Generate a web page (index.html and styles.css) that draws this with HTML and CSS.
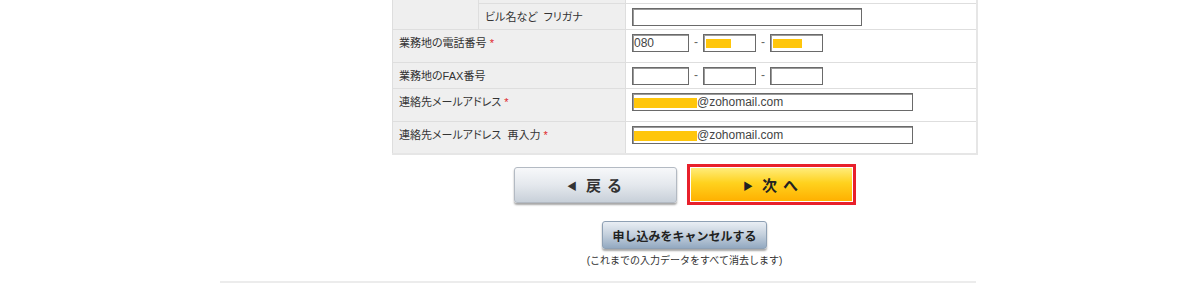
FILE: index.html
```html
<!DOCTYPE html>
<html lang="ja">
<head>
    <meta charset="UTF-8">
    <meta name="viewport" content="width=device-width, initial-scale=1.0">
    <title>お申し込み情報の入力</title>
    <link rel="stylesheet" href="styles.css">
</head>
<body>
    <div class="page">
        <div class="side"></div>
        <div class="main">
            <table class="form-table">
                <colgroup>
                    <col class="col-group">
                    <col class="col-sub">
                    <col class="col-value">
                </colgroup>
                <!-- tail of the address block, scrolled above the view -->
                <tr class="row-top">
                    <th class="group" rowspan="2"></th>
                    <th class="sub"></th>
                    <td></td>
                </tr>
                <tr class="row-s">
                    <th class="sub">ビル名など&nbsp;&nbsp;フリガナ</th>
                    <td><div class="field w-addr"></div></td>
                </tr>
                <tr class="row-l">
                    <th colspan="2">業務地の電話番号 <span class="req">*</span></th>
                    <td>
                        <div class="tel">
                            <div class="field w-tel1">080</div>
                            <span class="dash">-</span>
                            <div class="field w-tel"><span class="redact r-tel2"></span></div>
                            <span class="dash">-</span>
                            <div class="field w-tel"><span class="redact r-tel3"></span></div>
                        </div>
                    </td>
                </tr>
                <tr class="row-s">
                    <th colspan="2">業務地のFAX番号</th>
                    <td>
                        <div class="tel">
                            <div class="field w-tel1"></div>
                            <span class="dash">-</span>
                            <div class="field w-tel"></div>
                            <span class="dash">-</span>
                            <div class="field w-tel"></div>
                        </div>
                    </td>
                </tr>
                <tr class="row-l">
                    <th colspan="2">連絡先メールアドレス <span class="req">*</span></th>
                    <td><div class="field w-mail"><span class="redact r-mail"></span>@zohomail.com</div></td>
                </tr>
                <tr class="row-l">
                    <th colspan="2">連絡先メールアドレス&nbsp;&nbsp;再入力 <span class="req">*</span></th>
                    <td><div class="field w-mail"><span class="redact r-mail"></span>@zohomail.com</div></td>
                </tr>
            </table>

            <div class="nav-buttons">
                <button class="btn-back"><span class="arrow">◀</span>戻 る</button>
                <div class="next-frame">
                    <button class="btn-next"><span class="arrow">▶</span>次 へ</button>
                </div>
            </div>

            <div class="cancel">
                <button class="btn-cancel">申し込みをキャンセルする</button>
                <p class="cancel-note">(これまでの入力データをすべて消去します)</p>
            </div>
        </div>
    </div>
    <div class="page-rule"></div>
</body>
</html>
```

FILE: styles.css
```css
body {
    margin: 0;
    padding: 0;
    background: #fff;
    color: #333;
    font-family: "Liberation Sans", "Noto Sans CJK JP", sans-serif;
    font-size: 12px;
    overflow: hidden;
}

.page {
    display: flex;
    width: 756px;
    margin-left: 220px;
}
.side {
    width: 172px;
    flex-shrink: 0;
}
.main {
    width: 584px;
}

/* Form table */
.form-table {
    width: 584px;
    table-layout: fixed;
    border-collapse: collapse;
    border-top: none;
    border-left: 1px solid #e2e2e2;
    border-right: 2px solid #e6e6e6;
    border-bottom: 2px solid #e6e6e6;
}
.col-group { width: 86px; }
.col-sub { width: 147px; }
.col-value { width: 351px; }

.form-table th,
.form-table td {
    border: 1px solid #dedede;
    vertical-align: top;
    padding: 0;
}
.form-table th {
    background: #efefef;
    font-weight: normal;
    text-align: left;
    font-size: 11px;
    font-feature-settings: "palt";
    line-height: 15px;
    padding: 6px 6px 0;
    color: #333;
}
.form-table td {
    background: #fff;
    padding: 4px 6px 0;
}
.form-table .row-top th,
.form-table .row-top td {
    border-top: none;
    padding: 0;
}
.row-top { height: 3px; }
.row-s { height: 26px; }
.row-l { height: 33px; }

.req {
    color: #e0242b;
}

.field {
    box-sizing: border-box;
    height: 18px;
    border: 1px solid #6a6a6a;
    box-shadow: inset 1px 1px 0 #9a9a9a;
    background: #fff;
    padding: 1px 1px 0;
    line-height: 14px;
    font-size: 12px;
    color: #444;
    white-space: nowrap;
    overflow: hidden;
}
.w-addr { width: 230px; }
.w-tel1 { width: 57px; }
.w-tel { width: 53px; }
.w-mail { width: 281px; }

.tel {
    display: flex;
    align-items: flex-start;
}
.dash {
    width: 14px;
    text-align: center;
    color: #666;
    line-height: 16px;
}

.redact {
    display: inline-block;
    vertical-align: top;
    background: #ffc60b;
}
.r-tel2 { width: 25px; height: 9px; margin: 3px 0 0 1px; }
.r-tel3 { width: 29px; height: 9px; margin: 3px 0 0 1px; }
.r-mail { width: 63px; height: 10px; margin-top: 3px; }

/* Back / next */
.nav-buttons {
    display: flex;
    justify-content: center;
    align-items: center;
    gap: 10px;
    margin-top: 9px;
    padding-left: 1px;
}
.nav-buttons button {
    font-family: "Liberation Sans", "Noto Sans CJK JP", sans-serif;
    font-weight: bold;
    font-size: 15px;
    letter-spacing: 1px;
    cursor: pointer;
}
.arrow {
    font-size: 10px;
    margin-right: 8px;
    position: relative;
    top: -1px;
}
.btn-back {
    width: 163px;
    height: 36px;
    border: 1px solid #b3bac3;
    border-radius: 3px;
    background: linear-gradient(#f7f8fa, #e4e8ed 50%, #c8d0d9);
    box-shadow: 0 2px 2px rgba(0, 0, 0, 0.35);
    color: #333;
}
.next-frame {
    border: 3px solid #e8202b;
    background: #fff;
    padding: 1px;
}
.btn-next {
    display: block;
    width: 161px;
    height: 33px;
    border: none;
    background: linear-gradient(#ffec7a, #ffd21e 45%, #ffb000);
    color: #222;
}

/* Cancel */
.cancel {
    text-align: center;
    margin-top: 16px;
    padding-left: 1px;
}
.btn-cancel {
    width: 165px;
    height: 28px;
    border: 1px solid #8ea0b4;
    border-radius: 3px;
    background: linear-gradient(#e9eef4, #c3cfdc 50%, #93a9c1);
    box-shadow: 0 2px 2px rgba(0, 0, 0, 0.35);
    font-family: "Liberation Sans", "Noto Sans CJK JP", sans-serif;
    font-weight: bold;
    font-size: 12px;
    color: #222;
    padding: 0;
    cursor: pointer;
}
.cancel-note {
    margin: 5px 0 0;
    font-size: 10px;
    line-height: 14px;
    color: #333;
}

.page-rule {
    width: 756px;
    margin: 13px 0 0 220px;
    height: 2px;
    background: #ececec;
}
```
